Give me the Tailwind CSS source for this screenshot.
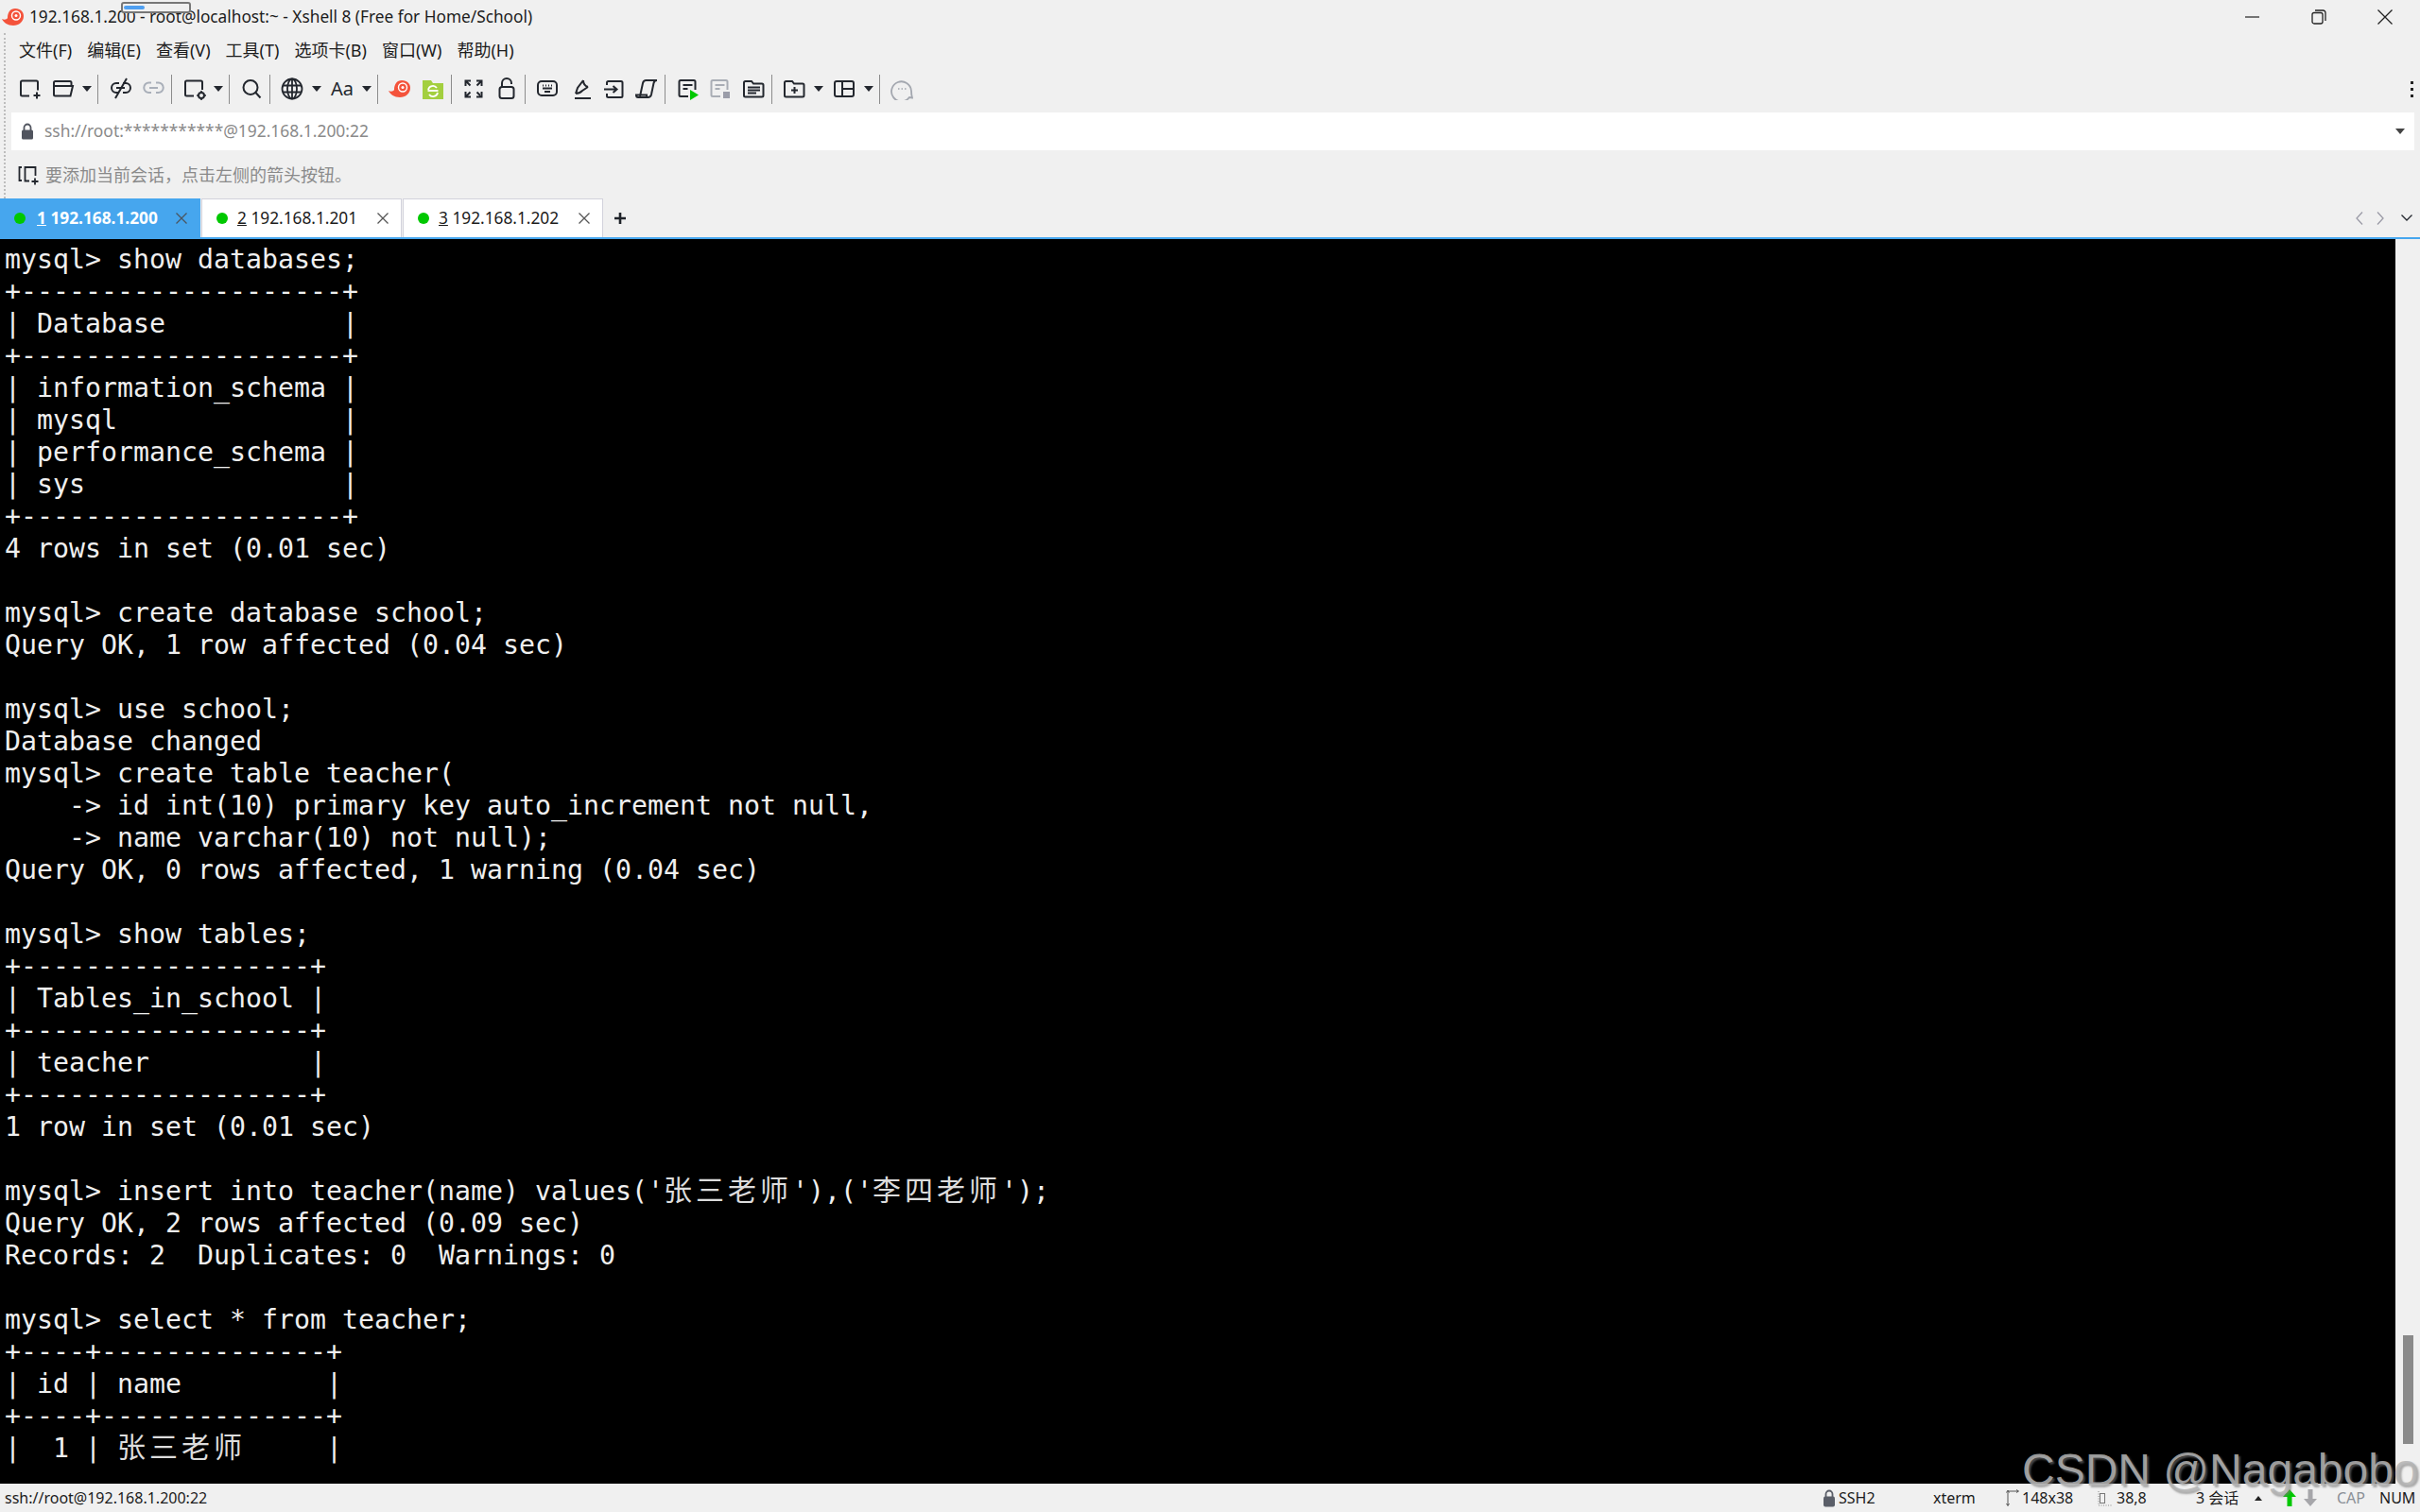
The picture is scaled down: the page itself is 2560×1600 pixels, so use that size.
<!DOCTYPE html>
<html lang="zh">
<head>
<meta charset="UTF-8" />
<title>Xshell 8</title>
<script src="https://cdn.jsdelivr.net/npm/@tailwindcss/browser@4"></script>
</head>
<body class="bg-[#f0f0f0]">
<div class="relative flex flex-col w-[2560px] h-[1600px] overflow-hidden bg-[#f0f0f0] text-[#1c1c1c] font-['Noto_Sans','Noto_Sans_CJK_SC',sans-serif]">

  <!-- title bar -->
  <div class="flex items-center h-[35px] shrink-0 pl-[2px]">
    <svg class="w-[24px] h-[24px] shrink-0" viewBox="0 0 24 24"><path d="M0 14c2 1 5 1 6-1 0-6 3-10 8-10 6 0 9 4 9 8 0 6-5 10-11 10-6 0-10-3-12-7z" fill="#f4533b"/><circle cx="15" cy="10.500" r="4.500" fill="none" stroke="#fff" stroke-width="1.400"/><circle cx="15" cy="10.500" r="1.500" fill="#fff"/></svg>
    <span class="ml-[5px] text-[17.25px] leading-none whitespace-pre">192.168.1.200 - root@localhost:~ - Xshell 8 (Free for Home/School)</span>
    <div class="ml-auto flex items-center mr-[2px]">
      <div class="flex justify-center w-[70px]"><svg class="w-[16px] h-[16px]" viewBox="0 0 16 16"><path d="M0 8h15" stroke="#222" stroke-width="1.2"/></svg></div>
      <div class="flex justify-center w-[70px]"><svg class="w-[16px] h-[16px]" viewBox="0 0 16 16" fill="none" stroke="#222" stroke-width="1.3"><rect x="1" y="3.5" width="11" height="11.5" rx="2"/><path d="M4 1h8.5A2.5 2.5 0 0 1 15 3.5V12"/></svg></div>
      <div class="flex justify-center w-[70px]"><svg class="w-[16px] h-[16px]" viewBox="0 0 16 16"><path d="M.5.5l15 15M15.5.5l-15 15" stroke="#222" stroke-width="1.3"/></svg></div>
    </div>
  </div>

  <div class="flex shrink-0">
    <div class="w-[12px] shrink-0"><div class="ml-[4px] h-[175px] border-l-2 border-dotted border-[#bdbdbd]"></div></div>
    <div class="flex-1 flex flex-col min-w-0">
      <!-- menu -->
      <div class="flex items-center h-[35px] pl-[8px] gap-[16px] text-[18px] leading-none">
        <span>文件(F)</span><span>编辑(E)</span><span>查看(V)</span><span>工具(T)</span><span>选项卡(B)</span><span>窗口(W)</span><span>帮助(H)</span>
      </div>

      <!-- toolbar -->
      <div class="flex items-center h-[49px] pl-[8px] pb-[1px] pr-[7px]">
        <svg class="w-[24px] h-[24px] shrink-0" viewBox="0 0 24 24" fill="none" stroke="#23272e" stroke-width="2"><path d="M11 19.5H3.5A1.5 1.5 0 0 1 2 18V5a1.5 1.5 0 0 1 1.5-1.5h15A1.5 1.5 0 0 1 20 5v8.5M19 15.5v7M15.5 19h7"/></svg>
        <svg class="ml-[11px] w-[24px] h-[24px] shrink-0" viewBox="0 0 24 24" fill="none" stroke="#23272e" stroke-width="2"><path d="M2 9V5.500A1.500 1.500 0 0 1 3.500 4H19a1.500 1.500 0 0 1 1.500 1.500V9M2 9h20l-2.500 10.500H3.500A1.500 1.500 0 0 1 2 18z"/></svg>
        <span class="ml-[8px] w-0 h-0 border-x-[5px] border-x-transparent border-t-[6px] border-t-[#23272e]"></span>
        <span class="ml-[6px] w-px h-[31px] bg-[#8c8c8c]"></span>
        <svg class="ml-[12px] w-[24px] h-[24px] shrink-0" viewBox="0 0 24 24" fill="none" stroke="#23272e" stroke-width="2"><path d="M10 6H7a5 5 0 0 0 0 10h3M14 6h3a5 5 0 0 1 0 10h-3M7 11h9M18 1L6 22"/></svg>
        <svg class="ml-[10px] w-[24px] h-[24px] shrink-0" viewBox="0 0 24 24" fill="none" stroke="#a9afb9" stroke-width="2"><path d="M10 5.500H7.500a5.200 5.200 0 0 0 0 10.500H10M15 5.500h2.500a5.200 5.200 0 0 1 0 10.500H15M8 11h9"/></svg>
        <span class="ml-[7px] w-px h-[31px] bg-[#8c8c8c]"></span>
        <svg class="ml-[12px] w-[24px] h-[24px] shrink-0" viewBox="0 0 24 24" fill="none" stroke="#23272e" stroke-width="2"><path d="M11 19.500H3.500A1.500 1.500 0 0 1 2 18V5a1.500 1.500 0 0 1 1.500-1.500h15A1.500 1.500 0 0 1 20 5v8"/><circle cx="19" cy="19" r="3"/><path d="M19 14v1.500M19 22.500V24M14 19h1.500M22.500 19H24" stroke-width="1.600"/></svg>
        <span class="ml-[8px] w-0 h-0 border-x-[5px] border-x-transparent border-t-[6px] border-t-[#23272e]"></span>
        <span class="ml-[6px] w-px h-[31px] bg-[#8c8c8c]"></span>
        <svg class="ml-[11px] w-[24px] h-[24px] shrink-0" viewBox="0 0 24 24" fill="none" stroke="#23272e" stroke-width="2"><circle cx="11" cy="10.500" r="7.500"/><path d="M16.500 16l5 5.500"/></svg>
        <span class="ml-[7px] w-px h-[31px] bg-[#8c8c8c]"></span>
        <svg class="ml-[11px] w-[24px] h-[24px] shrink-0" viewBox="0 0 24 24" fill="none" stroke="#23272e" stroke-width="1.800"><circle cx="12" cy="12" r="10.500"/><ellipse cx="12" cy="12" rx="5" ry="10.500"/><path d="M12 1.500v21M2 8.500h20M2 15.500h20"/></svg>
        <span class="ml-[9px] w-0 h-0 border-x-[5px] border-x-transparent border-t-[6px] border-t-[#23272e]"></span>
        <span class="ml-[10px] w-[24px] text-center text-[20px] leading-none text-[#23272e]">Aa</span>
        <span class="ml-[9px] w-0 h-0 border-x-[5px] border-x-transparent border-t-[6px] border-t-[#23272e]"></span>
        <span class="ml-[6px] w-px h-[31px] bg-[#8c8c8c]"></span>
        <svg class="ml-[11px] w-[24px] h-[24px] shrink-0" viewBox="0 0 24 24"><path d="M0 14c2 1 5 1 6-1 0-6 3-10 8-10 6 0 9 4 9 8 0 6-5 10-11 10-6 0-10-3-12-7z" fill="#f4533b"/><circle cx="15" cy="10.500" r="4.500" fill="none" stroke="#fff" stroke-width="1.400"/><circle cx="15" cy="10.500" r="1.500" fill="#fff"/></svg>
        <svg class="ml-[11px] w-[24px] h-[24px] shrink-0" viewBox="0 0 24 24"><path d="M1 3h9l2 3h11v17H1z" fill="#a3cf3f"/><path d="M7 13a5 5 0 0 1 9-2M17 16a5 5 0 0 1-9 2" fill="none" stroke="#fff" stroke-width="1.800"/><path d="M6.500 14h11" stroke="#fff" stroke-width="1.800"/></svg>
        <span class="ml-[7px] w-px h-[31px] bg-[#8c8c8c]"></span>
        <svg class="ml-[11px] w-[24px] h-[24px] shrink-0" viewBox="0 0 24 24" fill="none" stroke="#23272e" stroke-width="2"><path d="M3.500 9V3.500H9M3.500 3.500l5 5M20.500 9V3.500H15M20.500 3.500l-5 5M3.500 15v5.500H9M3.500 20.500l5-5M20.500 15v5.500H15M20.500 20.500l-5-5"/></svg>
        <svg class="ml-[11px] w-[24px] h-[24px] shrink-0" viewBox="0 0 24 24" fill="none" stroke="#23272e" stroke-width="2"><rect x="4.500" y="10" width="15" height="12" rx="2.500"/><path d="M7 10V6a5 5 0 0 1 10 0v1"/></svg>
        <span class="ml-[7px] w-px h-[31px] bg-[#8c8c8c]"></span>
        <svg class="ml-[11px] w-[24px] h-[24px] shrink-0" viewBox="0 0 24 24" fill="none" stroke="#23272e" stroke-width="2"><rect x="2" y="4" width="20" height="15" rx="4"/><path d="M7 8.500h1M10 8.500h1M13 8.500h1M16 8.500h1M7 11.500h10M9 15h6"/></svg>
        <svg class="ml-[11px] w-[24px] h-[24px] shrink-0" viewBox="0 0 24 24" fill="none" stroke="#23272e" stroke-width="2"><path d="M6 22h17M7 17l2-6 6-8M7 17c3 0 5-1 7-3l6-4M15 3c0 4 2 6 5 7"/></svg>
        <svg class="ml-[11px] w-[24px] h-[24px] shrink-0" viewBox="0 0 24 24" fill="none" stroke="#23272e" stroke-width="2"><path d="M5 8V5.500A1.500 1.500 0 0 1 6.500 4H20a1.500 1.500 0 0 1 1.500 1.500v14A1.500 1.500 0 0 1 20 21H6.500A1.500 1.500 0 0 1 5 19.500V17M2 12.500h13M11.500 9l4 3.500-4 3.500"/></svg>
        <svg class="ml-[11px] w-[24px] h-[24px] shrink-0" viewBox="0 0 24 24" fill="none" stroke="#23272e" stroke-width="2"><path d="M5 20l3-14c.5-2 1.500-3 3.500-3H23c-2 0-3 1-3.500 3L17 18c-.5 2-1.500 3-3.500 3H3c-1.500 0-2-1-2-2.500h11c0 1 .5 2.500 1.500 2.500"/></svg>
        <span class="ml-[7px] w-px h-[31px] bg-[#8c8c8c]"></span>
        <svg class="ml-[12px] w-[24px] h-[24px] shrink-0" viewBox="0 0 24 24"><path d="M12 20H4a1.500 1.500 0 0 1-1.500-1.500V4.500A1.500 1.500 0 0 1 4 3h14a1.500 1.500 0 0 1 1.500 1.500V13M6.500 8h10M6.500 12h5" fill="none" stroke="#23272e" stroke-width="2"/><path d="M14 13l9 5.500-9 5.500z" fill="#00c800"/></svg>
        <svg class="ml-[10px] w-[24px] h-[24px] shrink-0" viewBox="0 0 24 24"><path d="M12 20H4a1.500 1.500 0 0 1-1.500-1.500V4.500A1.500 1.500 0 0 1 4 3h14a1.500 1.500 0 0 1 1.500 1.500V13M6.500 8h10M6.500 12h5" fill="none" stroke="#a9adb5" stroke-width="2"/><rect x="15" y="15" width="7" height="7" fill="#9a9ca8"/></svg>
        <svg class="ml-[11px] w-[24px] h-[24px] shrink-0" viewBox="0 0 24 24" fill="none" stroke="#23272e" stroke-width="2"><path d="M2 5.500A1.500 1.500 0 0 1 3.500 4H10l2 2.500h9a1.500 1.500 0 0 1 1.500 1.500v11a1.500 1.500 0 0 1-1.500 1.500H3.500A1.500 1.500 0 0 1 2 19zM6 10.500h13M6 13.500h13M6 16.500h9"/></svg>
        <span class="ml-[7px] w-px h-[31px] bg-[#8c8c8c]"></span>
        <svg class="ml-[11px] w-[24px] h-[24px] shrink-0" viewBox="0 0 24 24" fill="none" stroke="#23272e" stroke-width="2"><path d="M2 5.500A1.500 1.500 0 0 1 3.500 4H10l2 2.500h9a1.500 1.500 0 0 1 1.500 1.500v11a1.500 1.500 0 0 1-1.500 1.500H3.500A1.500 1.500 0 0 1 2 19zM12.500 10v7M9 13.500h7"/></svg>
        <span class="ml-[9px] w-0 h-0 border-x-[5px] border-x-transparent border-t-[6px] border-t-[#23272e]"></span>
        <svg class="ml-[10px] w-[24px] h-[24px] shrink-0" viewBox="0 0 24 24" fill="none" stroke="#23272e" stroke-width="2"><rect x="2" y="4" width="20" height="16" rx="2"/><path d="M10 4v16M10 12h12"/></svg>
        <span class="ml-[9px] w-0 h-0 border-x-[5px] border-x-transparent border-t-[6px] border-t-[#23272e]"></span>
        <span class="ml-[6px] w-px h-[31px] bg-[#8c8c8c]"></span>
        <svg class="ml-[11px] w-[24px] h-[24px] shrink-0" viewBox="0 0 24 24" fill="none" stroke="#a3a7af" stroke-width="1.800"><path d="M23 21.500l-3-.5a10.500 10.500 0 1 1 2-7c0 2 0 4 1 7.500z" /><path d="M8 12h1.500M11.500 12H13M15 12h1.500" stroke-width="1.400"/></svg>
        <div class="ml-auto flex flex-col gap-[4px]">
          <span class="w-[3px] h-[3px] bg-[#222]"></span><span class="w-[3px] h-[3px] bg-[#222]"></span><span class="w-[3px] h-[3px] bg-[#222]"></span>
        </div>
      </div>

      <!-- address bar -->
      <div class="flex items-center h-[40px] mr-[6px] pl-[10px] pr-[10px] bg-white">
        <svg class="w-[14px] h-[18px] shrink-0" viewBox="0 0 14 18"><path d="M3.500 8V5a3.500 3.500 0 0 1 7 0v3" fill="none" stroke="#50545e" stroke-width="1.800"/><rect x="1" y="7.500" width="12" height="10" rx="1.500" fill="#50545e"/></svg>
        <span class="ml-[11px] text-[17.4px] leading-none text-[#8a8a8a] whitespace-pre">ssh://root:***********@192.168.1.200:22</span>
        <span class="ml-auto w-0 h-0 border-x-[5.500px] border-x-transparent border-t-[6px] border-t-[#444]"></span>
      </div>

      <!-- session hint -->
      <div class="flex items-center h-[51px] pl-[6px]">
        <svg class="w-[24px] h-[24px] shrink-0" viewBox="0 0 24 24" fill="none" stroke="#23272e" stroke-width="1.800"><path d="M5 4H2.500v14H5M13 18.500H8.500V4h11v9M19 15.500v7M15.500 19h7"/></svg>
        <span class="ml-[6px] text-[18px] leading-none text-[#8a8a8a] whitespace-pre">要添加当前会话，点击左侧的箭头按钮。</span>
      </div>
    </div>
  </div>

  <!-- tabs -->
  <div class="flex items-stretch h-[41px] shrink-0">
    <div class="flex items-center w-[212px] pl-[15px] pr-[14px] bg-[#46a6ee] text-white text-[17.3px] font-bold">
      <span class="w-[12px] h-[12px] rounded-full bg-[#00c800] shrink-0"></span>
      <span class="ml-[12px] whitespace-pre"><u>1</u> 192.168.1.200</span>
      <svg class="ml-auto w-[12px] h-[12px]" viewBox="0 0 12 12"><path d="M.5.5l11 11M11.500.500l-11 11" stroke="#4a5560" stroke-width="1.300"/></svg>
    </div>
    <div class="flex items-center ml-px w-[212px] pl-[15px] pr-[13px] bg-white border-x border-t border-[#d2d2dc] text-[17.3px]">
      <span class="w-[12px] h-[12px] rounded-full bg-[#00c800] shrink-0"></span>
      <span class="ml-[10px] whitespace-pre"><u>2</u> 192.168.1.201</span>
      <svg class="ml-auto w-[12px] h-[12px]" viewBox="0 0 12 12"><path d="M.5.5l11 11M11.500.500l-11 11" stroke="#555" stroke-width="1.300"/></svg>
    </div>
    <div class="flex items-center ml-px w-[212px] pl-[15px] pr-[13px] bg-white border-x border-t border-[#d2d2dc] text-[17.3px]">
      <span class="w-[12px] h-[12px] rounded-full bg-[#00c800] shrink-0"></span>
      <span class="ml-[10px] whitespace-pre"><u>3</u> 192.168.1.202</span>
      <svg class="ml-auto w-[12px] h-[12px]" viewBox="0 0 12 12"><path d="M.5.5l11 11M11.500.500l-11 11" stroke="#555" stroke-width="1.300"/></svg>
    </div>
    <div class="flex items-center ml-[12px]">
      <svg class="w-[12px] h-[12px]" viewBox="0 0 12 12"><path d="M6 0v12M0 6h12" stroke="#1f2329" stroke-width="2.600"/></svg>
    </div>
    <div class="ml-auto flex items-center pr-[8px]">
      <svg class="w-[8px] h-[14px]" viewBox="0 0 8 14" fill="none" stroke="#9a9aa6" stroke-width="1.300"><path d="M7 .5L1 7l6 6.500"/></svg>
      <svg class="ml-[14px] w-[8px] h-[14px]" viewBox="0 0 8 14" fill="none" stroke="#9a9aa6" stroke-width="1.300"><path d="M1 .5L7 7l-6 6.500"/></svg>
      <svg class="ml-[18px] w-[12px] h-[7px]" viewBox="0 0 12 7" fill="none" stroke="#23272e" stroke-width="1.300"><path d="M.5.5L6 6l5.500-5.500"/></svg>
    </div>
  </div>
  <div class="h-[2px] bg-[#46a6ee] shrink-0"></div>

  <!-- terminal -->
  <div class="flex flex-1 min-h-0">
    <pre class="flex-1 bg-black pt-[5px] pl-[5px] text-[28.24px] leading-[34px] text-[#efefef] font-['DejaVu_Sans_Mono','Noto_Sans_CJK_SC',monospace] overflow-hidden">mysql&gt; show databases;
+--------------------+
| Database           |
+--------------------+
| information_schema |
| mysql              |
| performance_schema |
| sys                |
+--------------------+
4 rows in set (0.01 sec)

mysql&gt; create database school;
Query OK, 1 row affected (0.04 sec)

mysql&gt; use school;
Database changed
mysql&gt; create table teacher(
    -&gt; id int(10) primary key auto_increment not null,
    -&gt; name varchar(10) not null);
Query OK, 0 rows affected, 1 warning (0.04 sec)

mysql&gt; show tables;
+------------------+
| Tables_in_school |
+------------------+
| teacher          |
+------------------+
1 row in set (0.01 sec)

mysql&gt; insert into teacher(name) values('<span class="font-['Noto_Sans_CJK_SC'] text-[30px] leading-[0px] tracking-[4px] text-[#dcdcdc]">张三老师</span>'),('<span class="font-['Noto_Sans_CJK_SC'] text-[30px] leading-[0px] tracking-[4px] text-[#dcdcdc]">李四老师</span>');
Query OK, 2 rows affected (0.09 sec)
Records: 2  Duplicates: 0  Warnings: 0

mysql&gt; select * from teacher;
+----+--------------+
| id | name         |
+----+--------------+
|  1 | <span class="font-['Noto_Sans_CJK_SC'] text-[30px] leading-[0px] tracking-[4px] text-[#dcdcdc]">张三老师</span>     |</pre>
    <div class="w-[26px] shrink-0">
      <div class="ml-[8px] mt-[1160px] w-[11px] h-[115px] bg-[#8a8a8a]"></div>
    </div>
  </div>

  <!-- status bar -->
  <div class="flex items-center h-[30px] shrink-0 pl-[5px] text-[16px] leading-none whitespace-pre">
    <span>ssh://root@192.168.1.200:22</span>
    <div class="ml-auto flex items-center">
      <svg class="w-[14px] h-[19px] shrink-0" viewBox="0 0 14 19"><path d="M3.500 8V5a3.500 3.500 0 0 1 7 0v3" fill="none" stroke="#5a5e68" stroke-width="1.800"/><rect x="1" y="7.500" width="12" height="11" rx="2" fill="#5a5e68"/></svg>
      <span class="ml-[3px] w-[100px]">SSH2</span>
      <span class="w-[75px]">xterm</span>
      <svg class="w-[16px] h-[18px] shrink-0" viewBox="0 0 16 18" fill="none" stroke="#555" stroke-width="1"><path d="M4 17V2h11M2.500 3.500L4 1l1.500 2.500M2.500 15L4 17.500 5.500 15M13 .5L15.500 2 13 3.500"/></svg>
      <span class="ml-[3px] w-[80px]">148x38</span>
      <svg class="w-[17px] h-[18px] shrink-0" viewBox="0 0 17 18" fill="none"><rect x="2.500" y="4.500" width="5" height="10" stroke="#777"/><path d="M1 2v15h15" stroke="#888" stroke-dasharray="1 1.500"/></svg>
      <span class="ml-[3px] w-[84px]">38,8</span>
      <span class="w-[62px]">3 会话</span>
      <span class="w-0 h-0 border-x-[4px] border-x-transparent border-b-[5px] border-b-[#222]"></span>
      <svg class="ml-[22px] w-[14px] h-[18px] shrink-0" viewBox="0 0 14 18"><path d="M7 0l7 8H9.500v10h-5V8H0z" fill="#00c800"/></svg>
      <svg class="ml-[8px] w-[14px] h-[18px] shrink-0" viewBox="0 0 14 18"><path d="M7 18l7-8H9.500V0h-5v10H0z" fill="#a6a6aa"/></svg>
      <span class="ml-[21px] w-[45px] text-[#8a8f96]">CAP</span>
      <span class="w-[43px]">NUM</span>
    </div>
  </div>

  <!-- window chrome overlay and image watermark -->
  <div class="absolute left-[128px] top-[2px] w-[74px] h-[12px] rounded-[3px] border-2 border-[#777] bg-[#efefef]">
    <div class="ml-px mt-[2px] w-[22px] h-[4px] rounded-full bg-[#4f9ff0]"></div>
  </div>
  <div class="absolute left-[2139px] top-[1528px] text-[48px] leading-[56px] whitespace-pre font-['Liberation_Sans',sans-serif] text-[#b4b4b4]/85 [text-shadow:2px_2px_2px_rgba(120,120,120,0.6)]">CSDN @Nagabobo</div>
</div>
</body>
</html>
